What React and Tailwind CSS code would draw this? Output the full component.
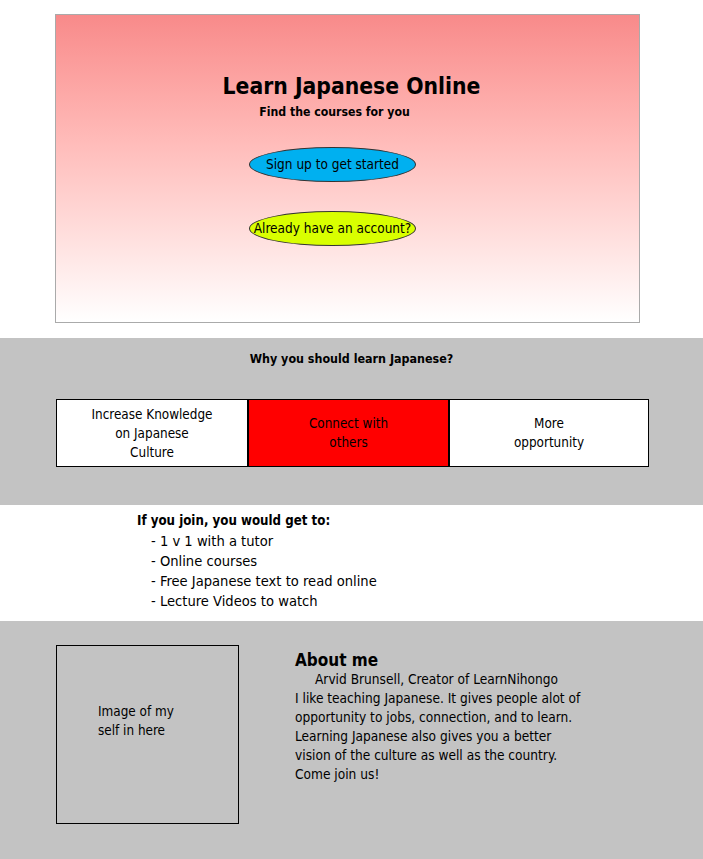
const font = { fontFamily: '"DejaVu Sans Condensed", "DejaVu Sans", sans-serif' };

function Reasons() {
  return (
    <div className="flex ml-[56px] w-[593px] h-[68px] text-[13.4px] leading-[19px] text-black">
      <div className="w-[192px] border border-black bg-white flex items-center justify-center text-center">
        <div>Increase Knowledge<br />on Japanese<br />Culture</div>
      </div>
      <div className="w-[201px] border border-black bg-[#ff0000] flex items-center justify-center text-center">
        <div>Connect with<br />others</div>
      </div>
      <div className="w-[200px] border border-black bg-white flex items-center justify-center text-center">
        <div>More<br />opportunity</div>
      </div>
    </div>
  );
}

export default function App() {
  return (
    <div className="w-[703px] bg-white text-black" style={font}>
      <div className="pt-[14px] pb-[15px]">
        <div className="ml-[55px] w-[585px] h-[309px] border border-[#aaaaaa] bg-gradient-to-b from-[#f88a8a] to-white flex flex-col">
          <h1 className="mt-[57px] pl-[8px] text-center text-[22.7px] leading-[28px] font-bold">Learn Japanese Online</h1>
          <p className="mt-[4px] pr-[26px] text-center text-[12.2px] leading-[16px] font-bold">Find the courses for you</p>
          <button className="mt-[27px] ml-[193px] w-[167px] h-[35px] rounded-[50%] border border-[#333] bg-[#00b0f0] text-[13.5px]">Sign up to get started</button>
          <button className="mt-[29px] ml-[193px] w-[167px] h-[35px] rounded-[50%] border border-[#333] bg-[#d9ff00] text-[13.5px]">Already have an account?</button>
        </div>
      </div>

      <div className="bg-[#c3c3c3] h-[167px] pt-[13px]">
        <h2 className="text-center text-[12.4px] leading-[16px] font-bold">Why you should learn Japanese?</h2>
        <div className="mt-[32px]">
          <Reasons />
        </div>
      </div>

      <div className="h-[116px] pl-[137px] pt-[6px] text-[14.6px] leading-[20px]">
        <p className="font-bold text-[13.2px]">If you join, you would get to:</p>
        <ul className="pl-[14px]">
          <li>- 1 v 1 with a tutor</li>
          <li>- Online courses</li>
          <li>- Free Japanese text to read online</li>
          <li>- Lecture Videos to watch</li>
        </ul>
      </div>

      <div className="bg-[#c3c3c3] h-[238px] pt-[24px] flex">
        <div className="ml-[56px] w-[183px] h-[179px] border border-black pl-[41px] pt-[56px] text-[13.4px] leading-[19px]">
          Image of my<br />self in here
        </div>
        <div className="ml-[56px] pt-[5px]">
          <h3 className="text-[17px] leading-[20px] font-bold">About me</h3>
          <p className="text-[13.6px] leading-[19px]">
            <span className="pl-[20px]">Arvid Brunsell, Creator of LearnNihongo</span><br />
            I like teaching Japanese. It gives people alot of<br />
            opportunity to jobs, connection, and to learn.<br />
            Learning Japanese also gives you a better<br />
            vision of the culture as well as the country.<br />
            Come join us!
          </p>
        </div>
      </div>
    </div>
  );
}
